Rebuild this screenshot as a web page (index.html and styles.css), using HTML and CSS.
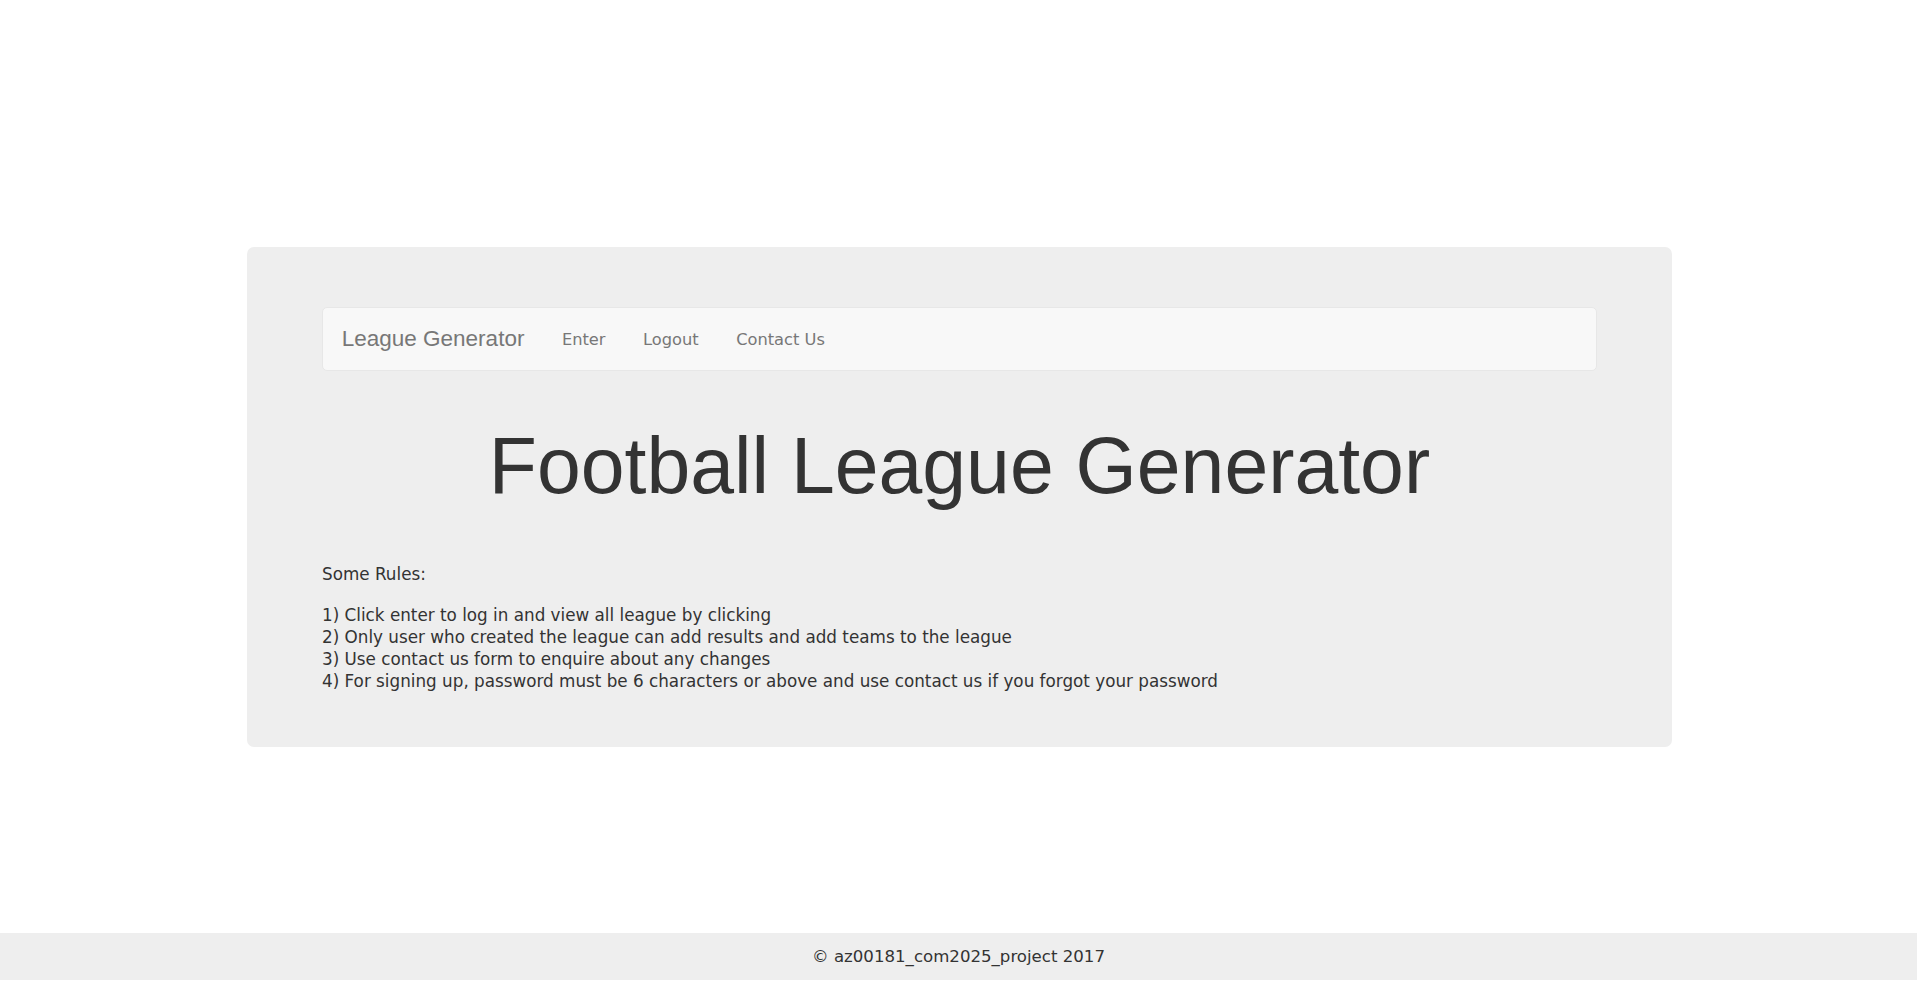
FILE: index.html
```html
<!DOCTYPE html>
<html lang="en">
<head>
<meta charset="utf-8">
<title>Football League Generator</title>
<link rel="stylesheet" href="styles.css">
</head>
<body>
<div class="page">
  <main class="main">
    <div class="jumbotron">
      <nav class="navbar">
        <a class="brand" href="#">League Generator</a>
        <ul class="nav-links">
          <li><a href="#">Enter</a></li>
          <li><a href="#">Logout</a></li>
          <li><a href="#">Contact Us</a></li>
        </ul>
      </nav>
      <h1 class="title">Football League Generator</h1>
      <p class="intro">Some Rules:</p>
      <p class="rules">1) Click enter to log in and view all league by clicking<br>2) Only user who created the league can add results and add teams to the league<br>3) Use contact us form to enquire about any changes<br>4) For signing up, password must be 6 characters or above and use contact us if you forgot your password</p>
    </div>
  </main>
  <footer class="footer">© az00181_com2025_project 2017</footer>
</div>
</body>
</html>
```
FILE: styles.css
```css
html, body {
  margin: 0;
  padding: 0;
  background: #ffffff;
}
body {
  font-family: "DejaVu Sans", Verdana, sans-serif;
  font-size: 16.25px;
  line-height: 22px;
  color: #333333;
}
.page {
  min-height: 100vh;
  display: flex;
  flex-direction: column;
}
.main {
  flex: 1;
  padding: 247px 0 0 2px;
}
.jumbotron {
  width: 1425px;
  margin: 0 auto;
  box-sizing: border-box;
  background: #eeeeee;
  border-radius: 7px;
  padding: 60px 75px 55px;
}
.navbar {
  display: flex;
  align-items: center;
  height: 64px;
  box-sizing: border-box;
  background: #f8f8f8;
  border: 1px solid #e7e7e7;
  border-radius: 5px;
}
.brand {
  font-family: "Liberation Sans", Arial, sans-serif;
  font-size: 22.5px;
  line-height: 25px;
  color: #777777;
  text-decoration: none;
  padding: 0 18.75px 1px;
}
.nav-links {
  display: flex;
  list-style: none;
  margin: 0;
  padding: 1px 0 0;
}
.nav-links a {
  display: block;
  padding: 0 18.75px;
  color: #777777;
  text-decoration: none;
}
.title {
  font-family: "Liberation Sans", Arial, sans-serif;
  font-size: 78.75px;
  font-weight: 400;
  line-height: 87px;
  text-align: center;
  color: #333333;
  margin: 51.5px 0 53px;
}
.intro,
.rules {
  font-size: 16.8px;
}
.intro {
  margin: 0 0 19.4px;
}
.rules {
  margin: 0;
}
.footer {
  height: 47px;
  margin-bottom: 7px;
  background: #eeeeee;
  display: flex;
  align-items: center;
  justify-content: center;
  font-size: 16.6px;
  color: #333333;
}
```
